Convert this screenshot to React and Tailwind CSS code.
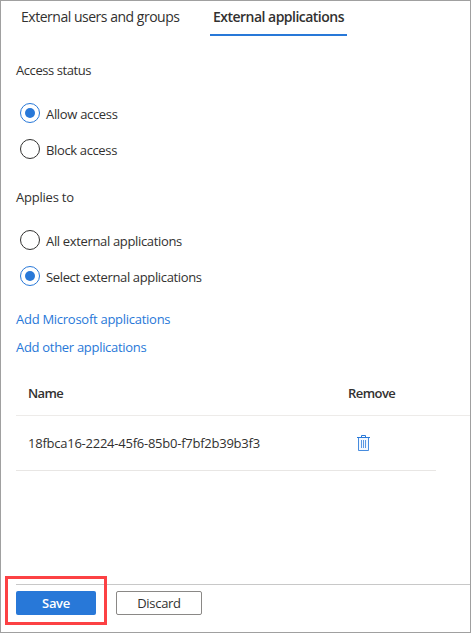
function Radio({ label, checked, spacing }) {
  return (
    <div className="flex h-5 items-center">
      <svg width="20" height="20" viewBox="0 0 20 20" className="mr-1.5 ml-1 shrink-0" fill="none">
        <circle cx="10" cy="10" r="9.5" stroke={checked ? "#2878d8" : "#323130"} strokeWidth="1" />
        {checked && <circle cx="10" cy="10" r="5" fill="#2878d8" />}
      </svg>
      <span className={`relative top-px ${spacing}`}>{label}</span>
    </div>
  );
}

function TrashIcon() {
  return (
    <svg width="13" height="17" viewBox="0 0 13 17" fill="none" stroke="#2878d8">
      <path d="M1.5 3v12.5h10V3" fill="#f3f8fe" strokeOpacity="0.85" />
      <path d="M0 2.5h13M4.5 2V.5h4V2" />
      <path d="M4.5 5v8M6.5 5v8M8.5 5v8" strokeOpacity="0.75" />
    </svg>
  );
}

export default function App() {
  return (
    <div className="flex h-[633px] w-[471px] flex-col overflow-hidden border border-[#a0a0a0] bg-white pl-[15px] font-['Open_Sans','Noto_Sans',sans-serif] text-[13px] leading-5 whitespace-nowrap text-[#323130]">
      <nav className="flex h-[35px] shrink-0 text-sm leading-5">
        <div className="w-[194px] pt-1.5 pl-[5px] tracking-[-0.48px]">External users and groups</div>
        <div className="w-[137px] border-b-2 border-[#2878d8] pt-1.5 pl-[3px] font-semibold tracking-[-0.52px]">External applications</div>
      </nav>
      <section className="mt-6 flex flex-col">
        <h2 className="tracking-[-0.43px]">Access status</h2>
        <div className="mt-[23px] flex flex-col gap-4">
          <Radio label="Allow access" checked spacing="tracking-[-0.32px]" />
          <Radio label="Block access" spacing="tracking-[-0.36px]" />
        </div>
      </section>
      <section className="mt-7 flex flex-col">
        <h2 className="tracking-[-0.22px]">Applies to</h2>
        <div className="mt-[23px] flex flex-col gap-4">
          <Radio label="All external applications" spacing="tracking-[-0.34px]" />
          <Radio label="Select external applications" checked spacing="tracking-[-0.35px]" />
        </div>
      </section>
      <div className="mt-[23px] flex flex-col items-start gap-2 text-[#2878d8]">
        <a className="tracking-[-0.27px]">Add Microsoft applications</a>
        <a className="tracking-[-0.3px]">Add other applications</a>
      </div>
      <div className="mt-[26px] flex h-[33px] shrink-0 border-b border-[#edebe9] pl-3 font-semibold">
        <div className="w-[320px] tracking-[-0.6px]">Name</div>
        <div className="tracking-[-0.55px]">Remove</div>
      </div>
      <div className="flex h-[55px] w-[420px] shrink-0 border-b border-[#e8e6e4] pt-[17px] pl-3">
        <div className="w-[329px] tracking-[-0.24px]">18fbca16-2224-45f6-85b0-f7bf2b39b3f3</div>
        <div className="pt-0.5"><TrashIcon /></div>
      </div>
      <footer className="relative mt-[113px] flex h-[48px] shrink-0 gap-5 border-t border-[#c8c8c8] pt-1.5">
        <button className="h-6 w-20 rounded-[2px] bg-[#2878d8] font-semibold text-white"><span className="tracking-[-0.3px]">Save</span></button>
        <button className="h-6 w-[86px] rounded-[2px] border border-[#8a8886] leading-[22px]"><span className="tracking-[-0.3px]">Discard</span></button>
        <div className="absolute -top-[9px] -left-[11px] h-[49px] w-[102px] border-3 border-[#fc4144]" />
      </footer>
    </div>
  );
}
